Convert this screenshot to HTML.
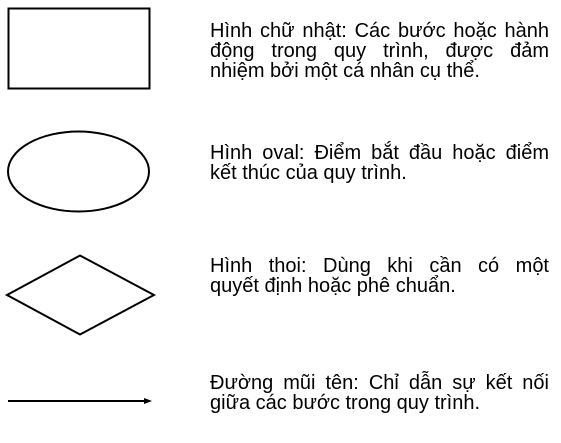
<!DOCTYPE html>
<html><head><meta charset="utf-8"><style>
html,body{margin:0;padding:0;background:#fff;width:561px;height:443px;overflow:hidden}
.t{position:absolute;left:210px;width:339px;font-family:"Liberation Sans",Arial,sans-serif;font-size:20px;line-height:20px;color:#000;white-space:nowrap}
.t div{text-align:justify;text-align-last:justify}
.t div.l{text-align-last:left}
svg{position:absolute;left:0;top:0}
</style></head><body>
<svg width="561" height="443">
<rect x="8.5" y="8.5" width="141" height="80" fill="none" stroke="#000" stroke-width="2"/>
<ellipse cx="78.5" cy="171.5" rx="70.5" ry="40" fill="none" stroke="#000" stroke-width="2"/>
<polygon points="7,295 80,255.5 154,295 80,334.5" fill="none" stroke="#000" stroke-width="2"/>
<line x1="8" y1="401" x2="146" y2="401" stroke="#000" stroke-width="2"/>
<polygon points="152,401 144,398 144,404" fill="#000"/>
</svg>
<div class="t" style="top:21px"><div>Hình chữ nhật: Các bước hoặc hành</div><div>động trong quy trình, được đảm</div><div class="l">nhiệm bởi một cá nhân cụ thể.</div></div>
<div class="t" style="top:143px"><div>Hình oval: Điểm bắt đầu hoặc điểm</div><div class="l">kết thúc của quy trình.</div></div>
<div class="t" style="top:256px"><div>Hình thoi: Dùng khi cần có một</div><div class="l">quyết định hoặc phê chuẩn.</div></div>
<div class="t" style="top:373px"><div>Đường mũi tên: Chỉ dẫn sự kết nối</div><div class="l">giữa các bước trong quy trình.</div></div>
</body></html>
